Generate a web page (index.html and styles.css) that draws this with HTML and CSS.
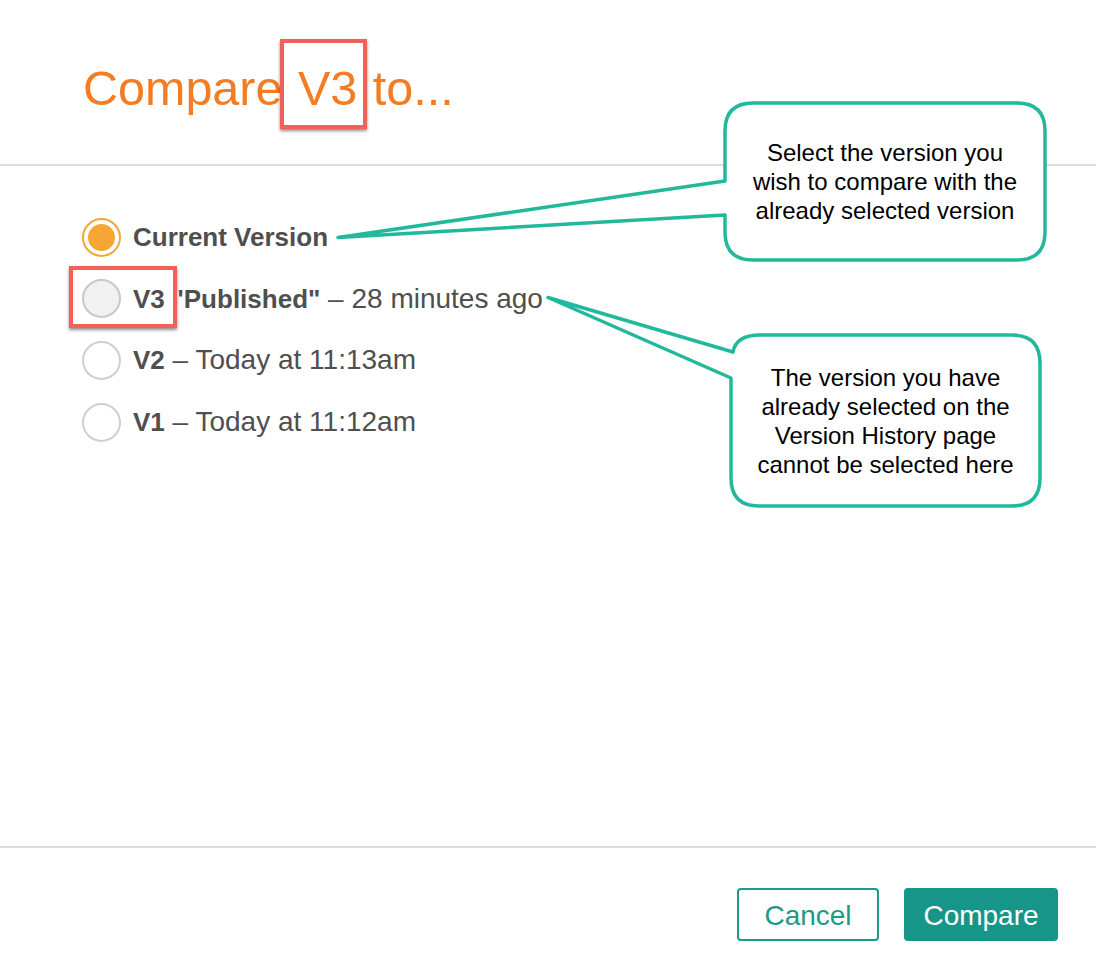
FILE: index.html
```html
<!DOCTYPE html>
<html lang="en">
<head>
<meta charset="utf-8">
<title>Compare V3 to...</title>
<link rel="stylesheet" href="styles.css">
</head>
<body>
<div class="dialog">
  <header class="dlg-head">
    <h1 class="title">Compare <span class="ver">V3</span> to...</h1>
  </header>
  <main class="dlg-body">
    <ul class="versions">
      <li class="opt"><span class="radio checked"></span><span class="label"><b>Current Version</b></span></li>
      <li class="opt"><span class="radio disabled"></span><span class="label"><b>V3</b> <b class="name">'Published"</b> – 28 minutes ago</span></li>
      <li class="opt"><span class="radio"></span><span class="label"><b>V2</b> – Today at 11:13am</span></li>
      <li class="opt"><span class="radio"></span><span class="label"><b>V1</b> – Today at 11:12am</span></li>
    </ul>
  </main>
  <footer class="dlg-foot">
    <button class="btn btn-outline">Cancel</button>
    <button class="btn btn-solid">Compare</button>
  </footer>
</div>

<div class="annotations">
  <svg class="callout-shapes" width="1096" height="965" viewBox="0 0 1096 965">
    <path d="M753 103 L1017 103 Q1045 103 1045 131 L1045 232 Q1045 260 1017 260 L753 260 Q725 260 725 232 L725 215 L338 237.5 L725 181 L725 131 Q725 103 753 103 Z" />
    <path d="M760 335 L1012 335 Q1040 335 1040 363 L1040 478 Q1040 506 1012 506 L759 506 Q731 506 731 478 L731 378 L548 297.5 L733 352 Q736 335 760 335 Z" />
  </svg>
  <div class="hl hl-title"></div>
  <div class="hl hl-radio"></div>
  <div class="callout-text ct-1">Select the version you<br>wish to compare with the<br>already selected version</div>
  <div class="callout-text ct-2">The version you have<br>already selected on the<br>Version History page<br>cannot be selected here</div>
</div>
</body>
</html>
```

FILE: styles.css
```css
* { box-sizing: border-box; }
html, body { margin: 0; padding: 0; background: #fff; }
body {
  font-family: "Liberation Sans", Arial, Helvetica, sans-serif;
  width: 1096px;
  height: 965px;
  position: relative;
  overflow: hidden;
}

.dialog {
  height: 965px;
  display: flex;
  flex-direction: column;
}

.dlg-head {
  height: 166px;
  border-bottom: 2px solid #dcdcdc;
  padding: 64px 0 0 83px;
}
.title {
  margin: 0;
  font-size: 48.5px;
  line-height: 48px;
  font-weight: 400;
  color: #f47c22;
}
.ver { margin: 0 2px 0 2px; }

.dlg-body {
  flex: 1;
  padding: 51px 0 0 82px;
}
.versions {
  list-style: none;
  margin: 0;
  padding: 0;
  display: flex;
  flex-direction: column;
  gap: 21.7px;
}
.opt {
  display: flex;
  align-items: center;
  gap: 12px;
  height: 40px;
}
.radio {
  width: 39px;
  height: 39px;
  border-radius: 50%;
  border: 2px solid #cfcfcf;
  background: #fff;
  flex: none;
  display: flex;
  align-items: center;
  justify-content: center;
}
.radio.disabled { background: #f1f1f1; border-color: #c8c8c8; }
.radio.checked { border-color: #f5a634; }
.radio.checked::after {
  content: "";
  width: 27px;
  height: 27px;
  border-radius: 50%;
  background: #f5a634;
}
.label {
  font-size: 28px;
  color: #4f4f4f;
}
.label b { font-weight: 700; font-size: 26px; }
.label .name { margin-left: 5px; }

.dlg-foot {
  height: 119px;
  border-top: 2px solid #dcdcdc;
  display: flex;
  justify-content: flex-end;
  align-items: flex-start;
  gap: 25px;
  padding: 40px 38px 0 0;
}
.btn {
  height: 53px;
  border-radius: 4px;
  font-family: "Liberation Sans", Arial, Helvetica, sans-serif;
  font-size: 28px;
  padding: 3px 0 0;
  cursor: pointer;
}
.btn-outline {
  width: 142px;
  background: #fff;
  border: 2px solid #1d998a;
  color: #1d998a;
}
.btn-solid {
  width: 154px;
  background: #179588;
  border: 2px solid #179588;
  color: #fff;
}

.annotations {
  position: absolute;
  left: 0;
  top: 0;
  width: 1096px;
  height: 965px;
  pointer-events: none;
}
.callout-shapes {
  position: absolute;
  left: 0;
  top: 0;
}
.callout-shapes path {
  fill: #fff;
  stroke: #22b89b;
  stroke-width: 3.5;
  stroke-linejoin: round;
}
.hl {
  position: absolute;
  border: 4px solid #f2605a;
  box-shadow: 0 2px 3px rgba(0, 0, 0, 0.45);
}
.hl-title { left: 280px; top: 39px; width: 87px; height: 90px; }
.hl-radio { left: 69px; top: 266px; width: 108px; height: 62px; }

.callout-text {
  position: absolute;
  display: flex;
  align-items: center;
  justify-content: center;
  text-align: center;
  font-size: 24px;
  line-height: 29px;
  color: #000;
}
.ct-1 { left: 725px; top: 103px; width: 320px; height: 157px; }
.ct-2 { left: 731px; top: 335px; width: 309px; height: 171px; }
```
